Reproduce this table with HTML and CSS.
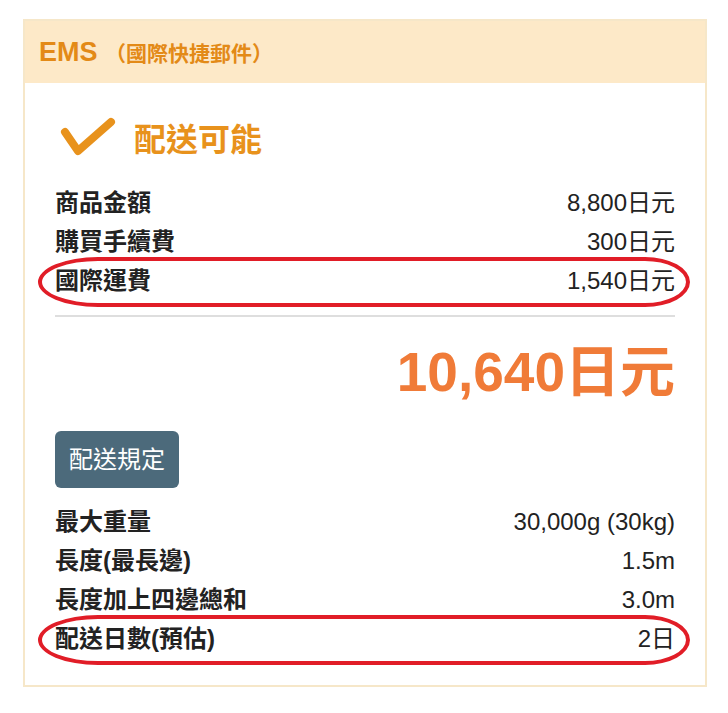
FILE: index.html
```html
<!DOCTYPE html>
<html lang="zh-Hant">
<head>
<meta charset="utf-8">
<title>EMS</title>
<link rel="stylesheet" href="styles.css">
</head>
<body>
<div class="card">
  <div class="card-header">
    <span class="title">EMS <span class="sub">（國際快捷郵件）</span></span>
  </div>
  <div class="card-body">
    <div class="status">
      <svg class="check" width="60" height="44" viewBox="0 0 60 44"><path d="M7 17 L20 36 L53 7" fill="none" stroke="#e8921c" stroke-width="8" stroke-linecap="round" stroke-linejoin="round"/></svg>
      <span>配送可能</span>
    </div>
    <div class="rows">
      <div class="row"><span class="label">商品金額</span><span class="value">8,800日元</span></div>
      <div class="row"><span class="label">購買手續費</span><span class="value">300日元</span></div>
      <div class="row circled"><span class="label">國際運費</span><span class="value">1,540日元</span></div>
    </div>
    <div class="divider"></div>
    <div class="total">10,640日元</div>
    <div class="actions"><span class="btn">配送規定</span></div>
    <div class="rows rows2">
      <div class="row"><span class="label">最大重量</span><span class="value">30,000g (30kg)</span></div>
      <div class="row"><span class="label">長度(最長邊)</span><span class="value">1.5m</span></div>
      <div class="row"><span class="label">長度加上四邊總和</span><span class="value">3.0m</span></div>
      <div class="row circled"><span class="label">配送日數(預估)</span><span class="value">2日</span></div>
    </div>
  </div>
</div>
</body>
</html>
```
FILE: styles.css
```css
body {
  margin: 0;
  background: #fff;
  font-family: "Liberation Sans", "Noto Sans CJK TC", sans-serif;
}
.card {
  margin: 19px 0 0 23px;
  width: 684px;
  box-sizing: border-box;
  border: 2px solid #f6e7c9;
  background: #fff;
}
.card-header {
  background: #fde9c8;
  height: 62px;
  padding-left: 14px;
  display: flex;
  align-items: center;
}
.title {
  color: #e38a17;
  font-weight: bold;
  font-size: 27px;
}
.title .sub {
  font-size: 21px;
}
.card-body {
  padding: 29px 30px 27px 30px;
}
.status {
  display: flex;
  align-items: center;
  gap: 16px;
  height: 50px;
  padding-left: 3px;
  color: #e8921c;
  font-size: 32px;
  font-weight: bold;
}
.check {
  display: block;
}
.rows {
  margin-top: 21px;
}
.row {
  display: flex;
  justify-content: space-between;
  font-size: 24px;
  line-height: 39px;
  height: 39px;
  color: #222;
  position: relative;
}
.row .label {
  font-weight: bold;
}
.circled::after {
  content: "";
  position: absolute;
  left: -17px;
  right: -15px;
  top: -4px;
  bottom: -7px;
  border: 4px solid #e11d27;
  border-radius: 60px 45px 45px 60px / 50%;
}
.divider {
  height: 2px;
  background: #dedede;
  margin-top: 15px;
}
.total {
  text-align: right;
  font-size: 55px;
  font-weight: bold;
  color: #f07b38;
  line-height: 70px;
  margin-top: 20px;
}
.actions {
  display: flex;
  margin-top: 24px;
}
.btn {
  background: #4c6a7b;
  color: #fff;
  font-size: 24px;
  line-height: 57px;
  height: 57px;
  padding: 0 14px;
  border-radius: 6px;
}
.rows2 {
  margin-top: 14px;
}
```
